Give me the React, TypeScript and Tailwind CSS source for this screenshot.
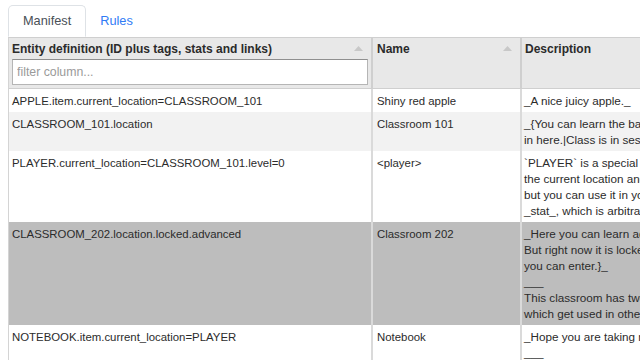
import React from "react";

const rows: { id: string; name: string; desc: string[]; bg: string }[] = [
  { id: "APPLE.item.current_location=CLASSROOM_101", name: "Shiny red apple", desc: ["_A nice juicy apple._"], bg: "bg-white" },
  {
    id: "CLASSROOM_101.location",
    name: "Classroom 101",
    desc: ["_{You can learn the basics of programming", "in here.|Class is in session.}_"],
    bg: "bg-[#f2f2f2]",
  },
  {
    id: "PLAYER.current_location=CLASSROOM_101.level=0",
    name: "<player>",
    desc: [
      "`PLAYER` is a special entity that tracks",
      "the current location and other stats,",
      "but you can use it in your own rules as a",
      "_stat_, which is arbitrary numbers.",
    ],
    bg: "bg-white",
  },
  {
    id: "CLASSROOM_202.location.locked.advanced",
    name: "Classroom 202",
    desc: [
      "_Here you can learn advanced programming.",
      "But right now it is locked until",
      "you can enter.}_",
      "___",
      "This classroom has two tags, locked and",
      "which get used in other rules.",
    ],
    bg: "bg-[#bdbdbd]",
  },
  {
    id: "NOTEBOOK.item.current_location=PLAYER",
    name: "Notebook",
    desc: ["_Hope you are taking notes._", "___", "You can write in it."],
    bg: "bg-white",
  },
];

function SortIcon() {
  return (
    <svg width="9" height="5" viewBox="0 0 9 5" className="absolute right-[8px] top-[8px]">
      <polygon points="0,5 4.5,0 9,5" fill="#c8c8c8" />
    </svg>
  );
}

export default function App() {
  return (
    <div
      className="w-[640px] h-[360px] overflow-hidden bg-white text-[#2b2b2b] text-[11.4px]"
      style={{ fontFamily: '"Liberation Sans", Arial, sans-serif' }}
    >
      <div className="pt-[5px] flex">
        <div className="w-[8px]" />
        <div className="h-[32px] px-[14px] flex items-center border border-[#dee2e6] border-b-white rounded-t-[5px] text-[12.75px] text-[#495057] bg-white relative z-10 -mb-px">
          Manifest
        </div>
        <div className="h-[32px] px-[14px] flex items-center text-[12.75px] text-[#2f7bf5]">Rules</div>
        <div className="flex-1" />
      </div>
      <div className="ml-[8px] w-[900px] border-t border-[#cfcfcf] border-l border-l-[#d4d4d4]">
        <table className="table-fixed border-collapse w-[900px]">
          <colgroup>
            <col className="w-[363px]" />
            <col className="w-[149px]" />
            <col className="w-[388px]" />
          </colgroup>
          <thead>
            <tr className="bg-[#e8e8e8] border-b border-[#cfcfcf]">
              <th className="relative text-left align-top font-bold text-[12px] pl-[3px] pr-[4px] pt-[3px] pb-[3px] leading-[17px] border-r-2 border-[#cfcfcf]">
                <div>Entity definition (ID plus tags, stats and links)</div>
                <SortIcon />
                <input
                  className="mt-[1px] w-[356px] h-[26px] bg-white border border-[#b5b5b5] border-t-[#8f8f8f] px-[4px] text-[12.3px] font-normal outline-none placeholder:text-[#9a9a9a]"
                  placeholder="filter column..."
                  readOnly
                />
              </th>
              <th className="relative text-left align-top font-bold text-[12px] pl-[4px] pt-[3px] leading-[17px] border-r-2 border-[#cfcfcf]">
                <div>Name</div>
                <SortIcon />
              </th>
              <th className="text-left align-top font-bold text-[12px] pl-[3px] pt-[3px] leading-[17px]">
                <div>Description</div>
              </th>
            </tr>
          </thead>
          <tbody>
            {rows.map((r) => (
              <tr key={r.id} className={r.bg}>
                <td className="align-top pl-[3px] pr-[4px] py-[3.5px] leading-[16px] whitespace-nowrap border-r-2 border-[#dadada]">
                  {r.id}
                </td>
                <td className="align-top pl-[4px] py-[3.5px] leading-[16px] whitespace-nowrap border-r-2 border-[#dadada]">
                  {r.name}
                </td>
                <td className="align-top pl-[2px] py-[3.5px] leading-[16px] whitespace-nowrap text-[11.7px]">
                  {r.desc.map((l, i) => (
                    <div key={i}>{l}</div>
                  ))}
                </td>
              </tr>
            ))}
          </tbody>
        </table>
      </div>
    </div>
  );
}
